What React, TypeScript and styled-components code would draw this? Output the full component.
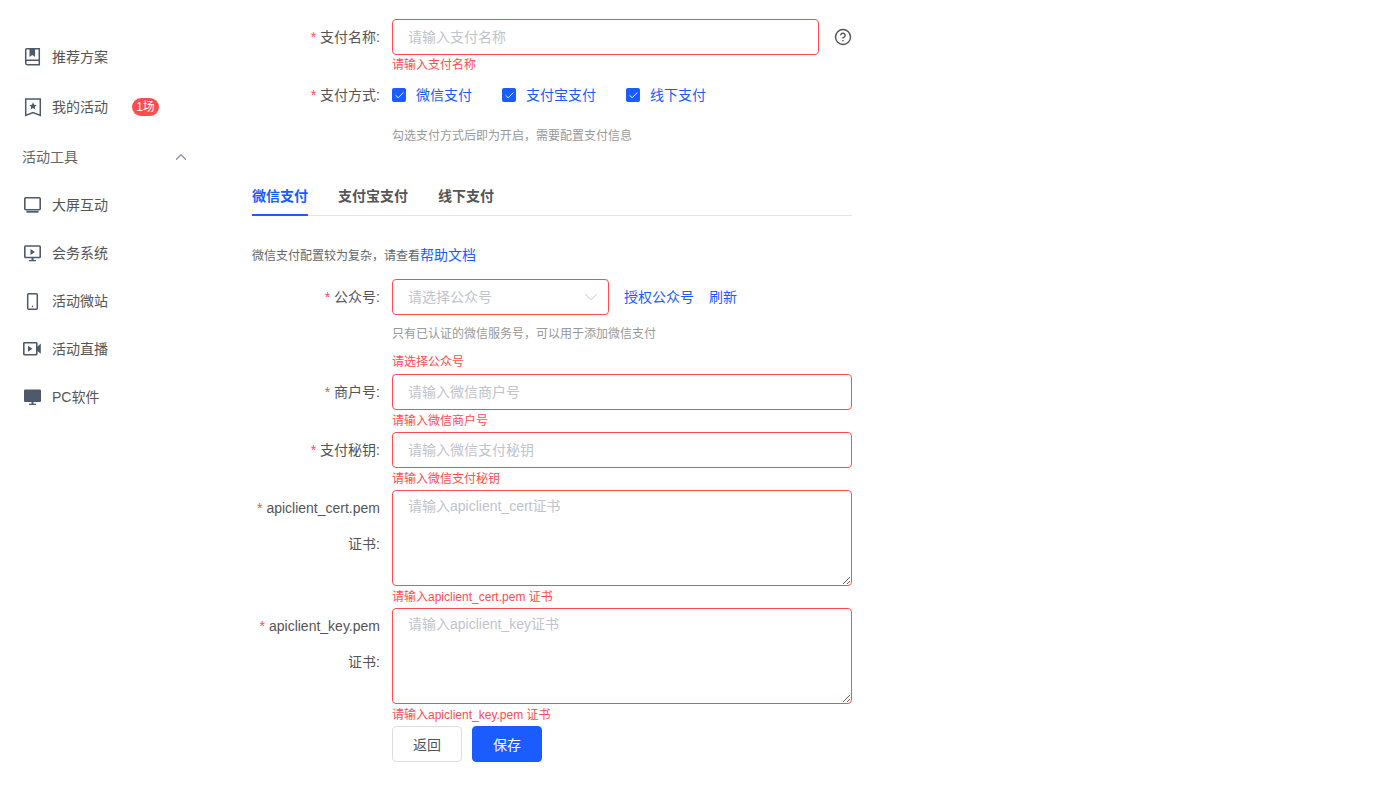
import React from "react";
import styled, { createGlobalStyle } from "styled-components";
import { ChevronDown, ChevronUp, CircleHelp, Check } from "lucide-react";

const Global = createGlobalStyle`
  * { box-sizing: border-box; }
  body {
    margin: 0;
    background: #fff;
    color: #555;
    font-family: "Liberation Sans", "Noto Sans CJK SC", sans-serif;
    font-size: 14px;
  }
`;

const Page = styled.div`
  display: flex;
  align-items: flex-start;
`;

const Sidebar = styled.nav`
  width: 222px;
  flex-shrink: 0;
  padding: 33px 32px 0 22px;
  display: flex;
  flex-direction: column;
`;

const NavItem = styled.div<{ $gap?: boolean }>`
  height: 48px;
  line-height: 48px;
  display: flex;
  align-items: center;
  gap: 10px;
  color: #555;
  margin-bottom: ${(p) => (p.$gap ? "2px" : "0")};
`;

const NavHead = styled(NavItem)`
  justify-content: space-between;
  color: #666;
  svg {
    color: #8a93a3;
  }
`;

const Badge = styled.span`
  margin-left: 14px;
  width: 27px;
  height: 18px;
  border-radius: 9px;
  background: #ff4d4f;
  color: #fff;
  font-size: 12px;
  line-height: 18px;
  text-align: center;
`;

const Main = styled.main`
  width: 630px;
  padding: 19px 0 27px 30px;
`;

const Row = styled.div`
  display: flex;
  align-items: flex-start;
`;

const Label = styled.label`
  width: 128px;
  margin-right: 12px;
  flex-shrink: 0;
  text-align: right;
  line-height: 36px;
  color: #555;
`;

const Star = styled.span`
  color: #ff4d4f;
  margin-right: 4px;
`;

const Control = styled.div`
  flex: 1;
  min-width: 0;
`;

const Inline = styled.div`
  display: flex;
  align-items: center;
  line-height: 36px;
`;

const Input = styled.input<{ $w?: number }>`
  display: block;
  flex-shrink: 0;
  width: ${(p) => (p.$w ? `${p.$w}px` : "100%")};
  height: 36px;
  padding: 0 15px;
  border: 1px solid #ff4d4f;
  border-radius: 4px;
  outline: none;
  font: inherit;
  color: #555;
  &::placeholder {
    color: #c0c4cc;
  }
`;

const TextArea = styled.textarea`
  display: block;
  width: 100%;
  height: 96px;
  padding: 5px 15px;
  border: 1px solid #ff4d4f;
  border-radius: 4px;
  outline: none;
  font: inherit;
  line-height: 20px;
  color: #555;
  &::placeholder {
    color: #c0c4cc;
  }
`;

const SelectBox = styled.div`
  width: 217px;
  height: 36px;
  line-height: 34px;
  padding: 0 6px 0 15px;
  border: 1px solid #ff4d4f;
  border-radius: 4px;
  display: flex;
  align-items: center;
  justify-content: space-between;
  color: #c0c4cc;
`;

const Error = styled.div<{ $top?: number; $line?: number }>`
  height: 22px;
  margin-top: ${(p) => p.$top ?? 0}px;
  font-size: 12px;
  line-height: ${(p) => p.$line ?? 22}px;
  color: #ff4d4f;
`;

const Hint = styled.div<{ $top: number }>`
  margin-top: ${(p) => p.$top}px;
  font-size: 12px;
  line-height: 20px;
  color: #999;
`;

const HelpIcon = styled(CircleHelp)`
  margin-left: 15px;
  flex-shrink: 0;
  color: #555;
`;

const Checks = styled.div`
  height: 36px;
  line-height: 36px;
  display: flex;
  align-items: center;
  gap: 30px;
`;

const CheckItem = styled.span`
  display: flex;
  align-items: center;
  gap: 10px;
  color: #1a5cff;
`;

const CheckBox = styled.span`
  width: 14px;
  height: 14px;
  border-radius: 2px;
  background: #1a5cff;
  color: #fff;
  display: flex;
  align-items: center;
  justify-content: center;
`;

const Tabs = styled.div`
  margin-top: 30px;
  height: 40px;
  display: flex;
  gap: 30px;
  border-bottom: 1px solid #e5e5e5;
`;

const Tab = styled.div<{ $active?: boolean }>`
  position: relative;
  height: 40px;
  line-height: 40px;
  font-weight: 700;
  color: ${(p) => (p.$active ? "#1a5cff" : "#555")};
  &::after {
    content: "";
    display: ${(p) => (p.$active ? "block" : "none")};
    position: absolute;
    left: 0;
    right: 0;
    bottom: 0;
    height: 2px;
    background: #1a5cff;
  }
`;

const Notice = styled.div`
  height: 20px;
  margin: 29px 0 14px;
  font-size: 12px;
  line-height: 20px;
  color: #666;
`;

const BlueLink = styled.a<{ $left?: number }>`
  color: #1a5cff;
  font-size: 14px;
  margin-left: ${(p) => p.$left ?? 0}px;
`;

const Buttons = styled.div`
  display: flex;
  gap: 10px;
`;

const Button = styled.button<{ $primary?: boolean }>`
  width: 70px;
  height: 36px;
  border-radius: 4px;
  border: 1px solid ${(p) => (p.$primary ? "#1a5cff" : "#ddd")};
  background: ${(p) => (p.$primary ? "#1a5cff" : "#fff")};
  color: ${(p) => (p.$primary ? "#fff" : "#555")};
  font: inherit;
`;

const IconSvg = styled.svg`
  width: 20px;
  height: 20px;
  flex-shrink: 0;
  color: #4e5969;
`;

const icons: Record<string, React.ReactNode> = {
  book: (
    <>
      <path d="M3.7 15V3a1.2 1.2 0 0 1 1.2-1.2h12.4v15.9H5.4a1.7 1.7 0 0 1-1.7-1.7V15a1.7 1.7 0 0 1 1.7-1.7h11.9" fill="none" stroke="currentColor" strokeWidth="1.5" />
      <path d="M7.5 2h5.6v8l-2.8-2-2.8 2z" fill="currentColor" />
    </>
  ),
  mark: (
    <>
      <path d="M3.7 2h14.6v16.5L11 15.5l-7.3 3z" fill="none" stroke="currentColor" strokeWidth="1.5" />
      <path d="M11 5.3l1.1 2.4 2.6.3-1.9 1.8.5 2.6-2.3-1.3-2.3 1.3.5-2.6L7.3 8l2.6-.3z" fill="currentColor" />
    </>
  ),
  screen: (
    <>
      <rect x="2.8" y="2.8" width="15.4" height="12" rx="1" fill="none" stroke="currentColor" strokeWidth="1.6" />
      <path d="M4.5 16h12v1.7h-12z" fill="currentColor" />
    </>
  ),
  play: (
    <>
      <rect x="2.8" y="3" width="15.4" height="11.5" rx=".8" fill="none" stroke="currentColor" strokeWidth="1.6" />
      <path d="M8.5 6l4.5 3-4.5 3zM9.5 15h2v2h2.5v1.3H7V17h2.5z" fill="currentColor" />
    </>
  ),
  tablet: (
    <>
      <rect x="5.7" y="2.7" width="9.6" height="15.6" rx="1" fill="none" stroke="currentColor" strokeWidth="1.5" />
      <rect x="9.8" y="14.8" width="1.4" height="1.4" fill="currentColor" />
    </>
  ),
  video: (
    <>
      <rect x="1.8" y="3.7" width="13" height="12" rx=".6" fill="none" stroke="currentColor" strokeWidth="1.6" />
      <path d="M6 6.8l4.5 3-4.5 3zM18.8 4.6v10.2L15 11.8V8z" fill="currentColor" />
    </>
  ),
  pc: (
    <>
      <rect x="2" y="2.5" width="17" height="12.5" rx="1" fill="currentColor" />
      <path d="M9.5 15h2v1.7H14V18H7v-1.3h2.5z" fill="currentColor" />
    </>
  ),
};

function NavIcon({ name }: { name: string }) {
  return <IconSvg viewBox="0 0 20 20">{icons[name]}</IconSvg>;
}

function FieldLabel({ text }: { text: string }) {
  return (
    <Label>
      <Star>*</Star>
      {text}
    </Label>
  );
}

const tools = [
  { icon: "screen", text: "大屏互动" },
  { icon: "play", text: "会务系统" },
  { icon: "tablet", text: "活动微站" },
  { icon: "video", text: "活动直播" },
  { icon: "pc", text: "PC软件" },
];

export default function App() {
  return (
    <Page>
      <Global />
      <Sidebar>
        <NavItem $gap>
          <NavIcon name="book" />
          推荐方案
        </NavItem>
        <NavItem $gap>
          <NavIcon name="mark" />
          我的活动
          <Badge>1场</Badge>
        </NavItem>
        <NavHead>
          活动工具
          <ChevronUp size={18} strokeWidth={1.7} />
        </NavHead>
        {tools.map((t) => (
          <NavItem key={t.text}>
            <NavIcon name={t.icon} />
            {t.text}
          </NavItem>
        ))}
      </Sidebar>

      <Main>
        <Row>
          <FieldLabel text="支付名称:" />
          <Control>
            <Inline>
              <Input $w={427} placeholder="请输入支付名称" />
              <HelpIcon size={18} strokeWidth={1.9} />
            </Inline>
            <Error $line={20}>请输入支付名称</Error>
          </Control>
        </Row>
        <Row>
          <FieldLabel text="支付方式:" />
          <Control>
            <Checks>
              {["微信支付", "支付宝支付", "线下支付"].map((m) => (
                <CheckItem key={m}>
                  <CheckBox>
                    <Check size={11} strokeWidth={2} />
                  </CheckBox>
                  {m}
                </CheckItem>
              ))}
            </Checks>
            <Hint $top={13}>勾选支付方式后即为开启，需要配置支付信息</Hint>
          </Control>
        </Row>

        <Tabs>
          <Tab $active>微信支付</Tab>
          <Tab>支付宝支付</Tab>
          <Tab>线下支付</Tab>
        </Tabs>

        <Notice>
          微信支付配置较为复杂，请查看<BlueLink>帮助文档</BlueLink>
        </Notice>

        <Row>
          <FieldLabel text="公众号:" />
          <Control>
            <Inline>
              <SelectBox>
                请选择公众号
                <ChevronDown size={22} strokeWidth={1} />
              </SelectBox>
              <BlueLink $left={15}>授权公众号</BlueLink>
              <BlueLink $left={15}>刷新</BlueLink>
            </Inline>
            <Hint $top={9}>只有已认证的微信服务号，可以用于添加微信支付</Hint>
            <Error $top={8} $line={20}>
              请选择公众号
            </Error>
          </Control>
        </Row>
        <Row>
          <FieldLabel text="商户号:" />
          <Control>
            <Input placeholder="请输入微信商户号" />
            <Error>请输入微信商户号</Error>
          </Control>
        </Row>
        <Row>
          <FieldLabel text="支付秘钥:" />
          <Control>
            <Input placeholder="请输入微信支付秘钥" />
            <Error>请输入微信支付秘钥</Error>
          </Control>
        </Row>
        <Row>
          <FieldLabel text="apiclient_cert.pem 证书:" />
          <Control>
            <TextArea placeholder="请输入apiclient_cert证书" />
            <Error>请输入apiclient_cert.pem 证书</Error>
          </Control>
        </Row>
        <Row>
          <FieldLabel text="apiclient_key.pem 证书:" />
          <Control>
            <TextArea placeholder="请输入apiclient_key证书" />
            <Error>请输入apiclient_key.pem 证书</Error>
          </Control>
        </Row>
        <Row>
          <Label />
          <Buttons>
            <Button>返回</Button>
            <Button $primary>保存</Button>
          </Buttons>
        </Row>
      </Main>
    </Page>
  );
}
